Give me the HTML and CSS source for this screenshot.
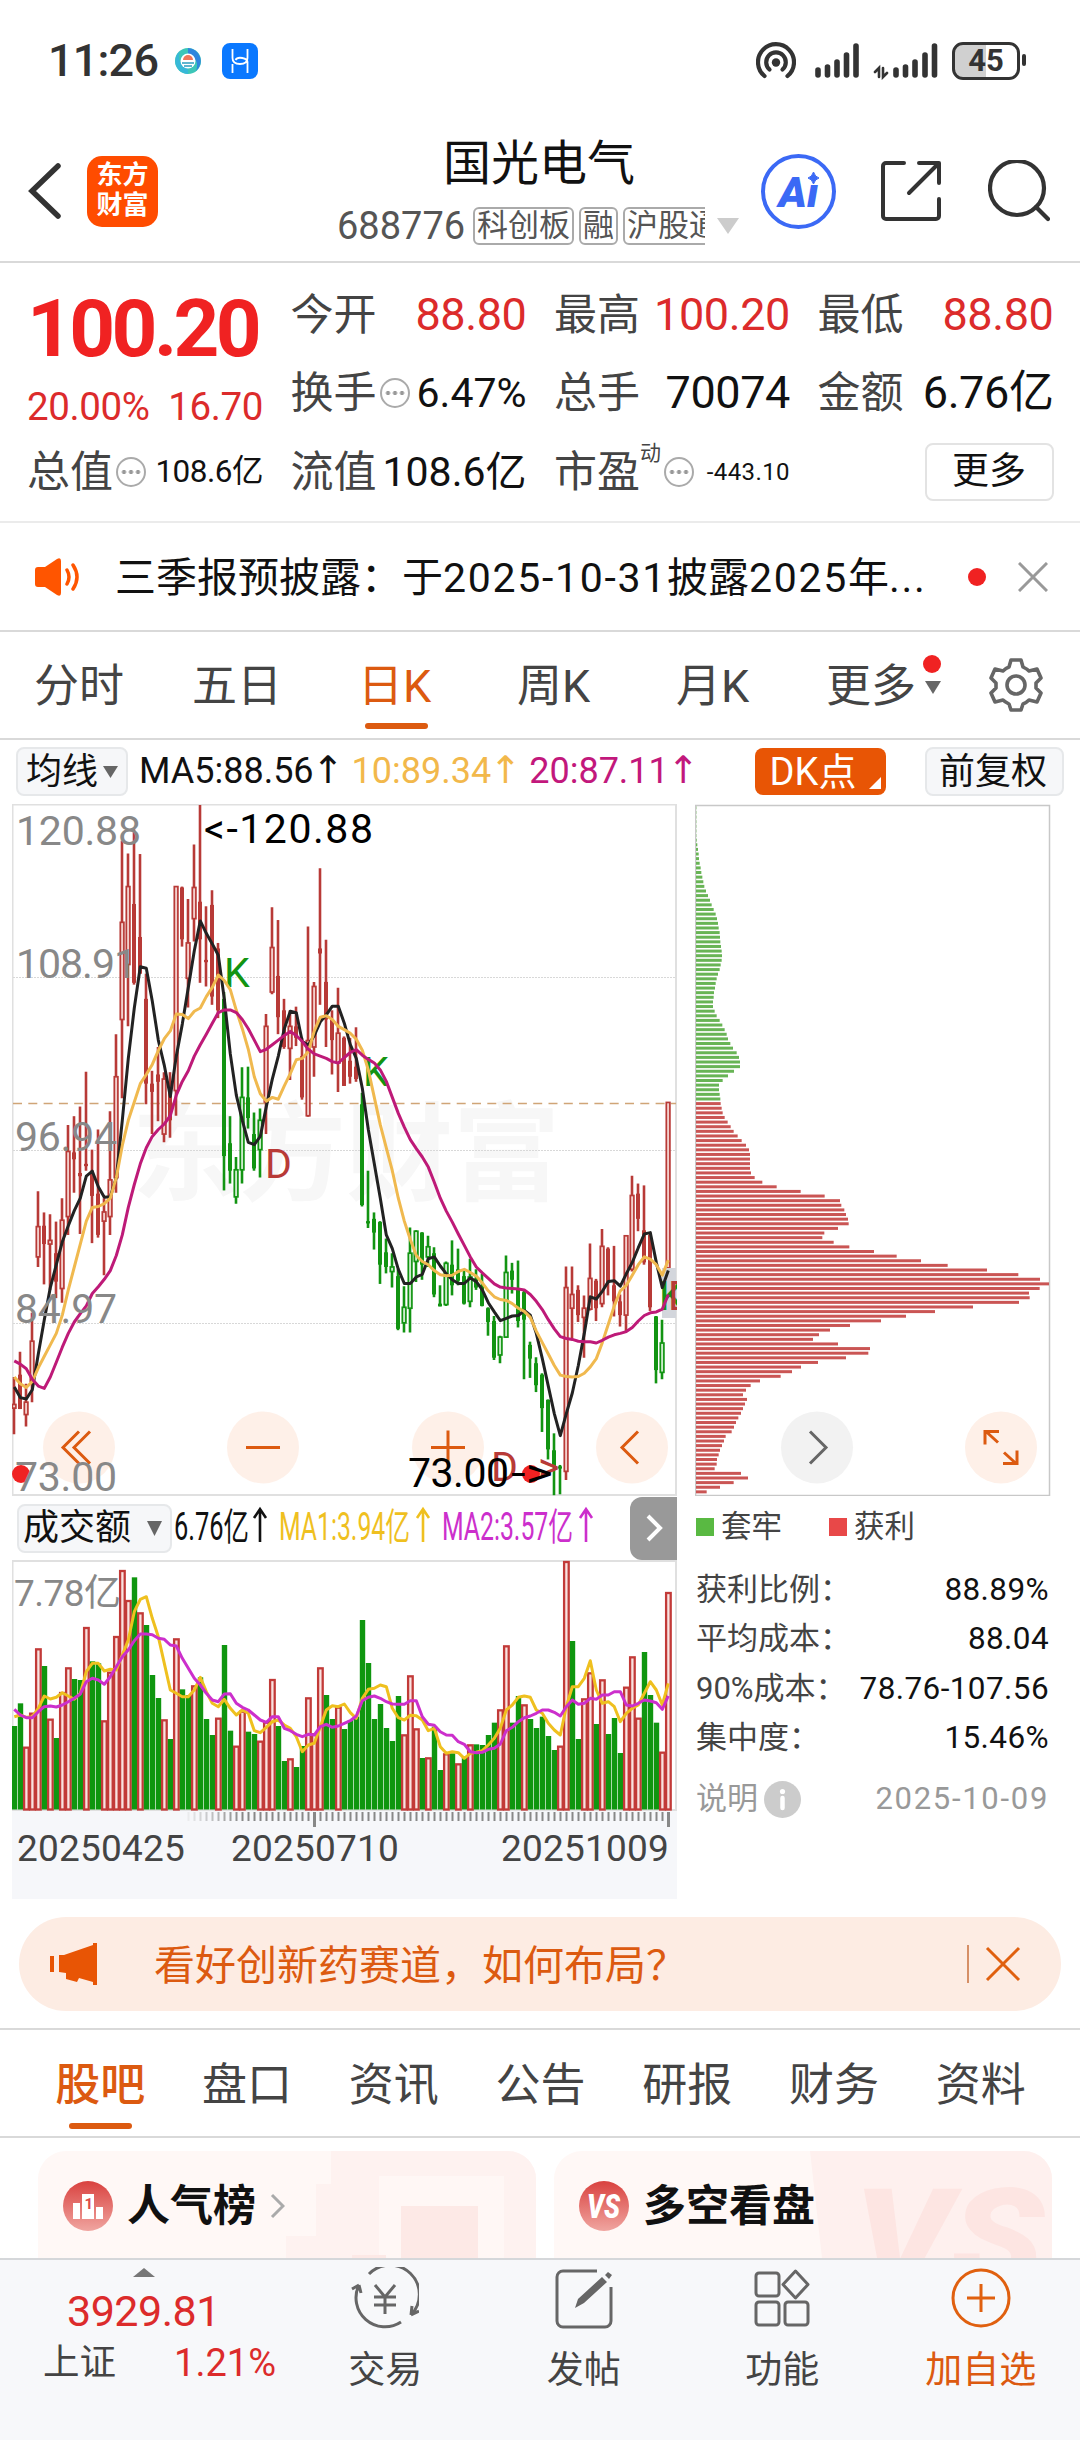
FILE: index.html
```html
<!DOCTYPE html>
<html lang="zh-CN">

<head>
    <meta charset="UTF-8">
    <meta name="viewport" content="width=device-width, initial-scale=1.0">
    <title>国光电气 688776</title>
    <link rel="stylesheet" href="styles.css">
</head>

<body>
    <div class="status-bar">
        <div class="status-left">
            <span class="clock">11:26</span>
            <svg class="app-dot" width="28" height="28" viewBox="0 0 28 28">
                <circle cx="14" cy="14" r="13" fill="#3cc6b8"/>
                <path d="M14 1a13 13 0 0 1 8 23c3-8 0-14-8-16z" fill="#2f86dd"/>
                <path d="M14 27a13 13 0 0 1-8-23c-3 8 0 14 8 16z" fill="#37b8d8"/>
                <circle cx="14" cy="14" r="7.500" fill="#fff"/>
                <path d="M9 13a5 5 0 0 1 10 0z" fill="#f0775a"/>
                <path d="M8 16h12M10 19h8" stroke="#2a9fc0" stroke-width="1.6"/>
            </svg>
            <svg class="app-square" width="36" height="36" viewBox="0 0 36 36">
                <rect width="36" height="36" rx="8" fill="#0a78ff"/>
                <path d="M10.500 6v9c0 4 3 6 7.500 6s7.500-2 7.500-6V6M10.500 30v-9M25.500 30V19c0-4-10-6-12-2" fill="none" stroke="#fff" stroke-width="1.800"/>
            </svg>
        </div>
        <div class="status-right">
            <svg width="40" height="38" viewBox="0 0 40 38" fill="none" stroke="#333" stroke-width="4.200" stroke-linecap="round">
                <path d="M8.500 34a18 18 0 1 1 23 0"/>
                <path d="M13.500 27.500a9.800 9.800 0 1 1 13 0"/>
                <circle cx="20" cy="20.500" r="4.200" fill="#333" stroke="none"/>
            </svg>
            <svg width="46" height="38" viewBox="0 0 46 38" stroke="#333" stroke-width="5.600" stroke-linecap="round">
                <path d="M3 28v5M12.500 25v8M22 20v13M31.500 13v20M41 4v29"/>
            </svg>
            <svg width="66" height="38" viewBox="0 0 66 38" stroke="#333" stroke-width="5.600" stroke-linecap="round">
                <path d="M23 28v5M32.500 25v8M42 20v13M52 13v20M61.500 4v29"/>
                <path d="M2 30l4-4v9M10 26v9l4-4" fill="none" stroke-width="2.600"/>
            </svg>
            <div class="battery"><span>45</span></div>
        </div>
    </div>

    <header class="header">
        <svg class="back" width="36" height="58" viewBox="0 0 36 58">
            <path d="M31 4L5 29l26 25" fill="none" stroke="#333" stroke-width="5.500" stroke-linecap="round"/>
        </svg>
        <div class="logo">东方<br>财富</div>
        <div class="title-box">
            <h1>国光电气</h1>
            <div class="code-row">
                <span class="code">688776</span>
                <div class="tags"><span>科创板</span><span>融</span><span>沪股通</span></div>
                <svg width="24" height="16" viewBox="0 0 24 16"><path d="M1 0h22L12 16z" fill="#ccc"/></svg>
            </div>
        </div>
        <div class="header-icons">
            <div class="ai">Ai<svg width="13" height="14" viewBox="0 0 13 14"><path d="M6.500 1Q8 6 12 7Q8 8 6.500 13Q5 8 1 7Q5 6 6.500 1" fill="#3b69f5" stroke="#3b69f5"/></svg></div>
            <svg width="62" height="62" viewBox="0 0 62 62" fill="none" stroke="#333" stroke-width="4" stroke-linejoin="round" stroke-linecap="round">
                <path d="M23 3H5a3 3 0 0 0-3 3v50a3 3 0 0 0 3 3h50a3 3 0 0 0 3-3V39M38 3h20v20M57 4L28 33"/>
            </svg>
            <svg width="62" height="62" viewBox="0 0 62 62" fill="none" stroke="#333" stroke-width="4.200" stroke-linecap="round">
                <circle cx="29" cy="28" r="27"/><path d="M48 47l12 12"/>
            </svg>
        </div>
    </header>

    <section class="quote">
        <div class="price-cell">
            <div class="price">100.20</div>
            <div class="change"><span>20.00%</span><span>16.70</span></div>
        </div>
        <div class="cell"><label>今开</label><b class="red">88.80</b></div>
        <div class="cell"><label>最高</label><b class="red">100.20</b></div>
        <div class="cell"><label>最低</label><b class="red">88.80</b></div>
        <div class="cell"><label>换手<i class="dots"></i></label><b class="mid">6.47%</b></div>
        <div class="cell"><label>总手</label><b>70074</b></div>
        <div class="cell"><label>金额</label><b>6.76亿</b></div>
        <div class="cell"><label>总值<i class="dots"></i></label><b class="small">108.6亿</b></div>
        <div class="cell"><label>流值</label><b class="mid">108.6亿</b></div>
        <div class="cell"><label>市盈<sup>动</sup><i class="dots"></i></label><b class="tiny">-443.10</b></div>
        <div class="cell"><button class="more-btn">更多</button></div>
    </section>

    <div class="notice">
        <svg width="46" height="38" viewBox="0 0 46 38">
            <path d="M0 12q0-3 3-3h7L22 1q4-2 4 2v32q0 4-4 2L10 29H3q-3 0-3-3z" fill="#ff5500"/>
            <path d="M32 12q4 7 0 14M38 7q8 12 0 24" fill="none" stroke="#ff5500" stroke-width="3.500" stroke-linecap="round"/>
        </svg>
        <p>三季报预披露：于<span>2025-10-31</span>披露<span>2025</span>年<span>...</span></p>
        <span class="red-dot"></span>
        <svg width="30" height="30" viewBox="0 0 30 30"><path d="M1 1l28 28M29 1L1 29" stroke="#999" stroke-width="3"/></svg>
    </div>

    <nav class="period-tabs">
        <span>分时</span>
        <span>五日</span>
        <span class="active">日K</span>
        <span>周K</span>
        <span>月K</span>
        <span class="more">更多<svg width="16" height="13" viewBox="0 0 16 13"><path d="M0 0h16L8 13z" fill="#666"/></svg><i class="red-dot"></i></span>
        <svg class="gear" width="54" height="54" viewBox="0 0 54 54" fill="none" stroke="#666" stroke-width="3.600" stroke-linejoin="round">
            <path d="M22 2h10l2 7q4 2 6 4l8-2 4 9-5 5v5l5 5-4 9-8-2q-3 3-6 4l-2 6H22l-2-6q-4-2-6-4l-8 2-4-9 5-5v-5l-5-5 4-9 8 2q3-3 6-4z"/>
            <circle cx="27" cy="27" r="9"/>
        </svg>
    </nav>

    <div class="ma-bar">
        <button class="chip">均线<svg width="15" height="12" viewBox="0 0 15 12"><path d="M0 0h15L7.500 12z" fill="#666"/></svg></button>
        <div class="ma-values">
            <span>MA5:88.56<u>↑</u></span>
            <span class="yellow">10:89.34<u>↑</u></span>
            <span class="pink">20:87.11<u>↑</u></span>
        </div>
        <button class="dk">DK点</button>
        <button class="chip plain">前复权</button>
    </div>

    <main class="charts">
        <div class="left">
            <svg id="kline" width="665" height="692" viewBox="12 804 665 692"></svg>
            <div class="vol-bar">
                <button class="chip">成交额<svg width="15" height="15" viewBox="0 0 15 15"><path d="M0 0h15L7.500 15z" fill="#666"/></svg></button>
                <svg class="vol-values" width="440" height="48" viewBox="175 1506 440 48">
                    <text x="174" y="1542" textLength="75" lengthAdjust="spacingAndGlyphs">6.76亿</text>
                    <text x="279" y="1542" textLength="131" lengthAdjust="spacingAndGlyphs" fill="#efc01f">MA1:3.94亿</text>
                    <text x="442" y="1542" textLength="131" lengthAdjust="spacingAndGlyphs" fill="#cc2fcc">MA2:3.57亿</text>
                    <g fill="none" stroke-width="2.600">
                        <path d="M260 1544v-33M254 1520l6-9 6 9" stroke="#111"/>
                        <path d="M423 1544v-33M417 1520l6-9 6 9" stroke="#efc01f"/>
                        <path d="M586 1544v-33M580 1520l6-9 6 9" stroke="#cc2fcc"/>
                    </g>
                </svg>
                <button class="expand"><svg width="18" height="28" viewBox="0 0 18 28"><path d="M3 2l12 12L3 26" fill="none" stroke="#fff" stroke-width="4"/></svg></button>
            </div>
            <svg id="volume" width="665" height="251" viewBox="12 1560 665 251"></svg>
            <div class="axis">
                <svg id="ticks" width="665" height="18" viewBox="12 1811 665 18"></svg>
                <div class="dates"><span>20250425</span><span>20250710</span><span>20251009</span></div>
            </div>
        </div>

        <div class="right">
            <svg id="chips" width="356" height="692" viewBox="695 804 356 692"></svg>
            <div class="legend">
                <span><i class="sq green"></i>套牢</span>
                <span><i class="sq"></i>获利</span>
            </div>
            <dl>
                <div><dt>获利比例：</dt><dd>88.89%</dd></div>
                <div><dt>平均成本：</dt><dd>88.04</dd></div>
                <div><dt>90%成本：</dt><dd>78.76-107.56</dd></div>
                <div><dt>集中度：</dt><dd>15.46%</dd></div>
            </dl>
            <div class="explain">
                <span>说明</span>
                <svg width="37" height="37" viewBox="0 0 37 37"><circle cx="18.500" cy="18.500" r="18.500" fill="#ccc"/><circle cx="18.500" cy="10.500" r="2.600" fill="#fff"/><path d="M18.500 17v10" stroke="#fff" stroke-width="4.500" stroke-linecap="round"/></svg>
                <time>2025-10-09</time>
            </div>
        </div>
    </main>

    <div class="banner">
        <svg width="48" height="42" viewBox="0 0 48 42" fill="#e85505">
            <path d="M0 13h4v16H0zM9 12h5L43 2V0h4v42h-4v-3l-14-4-2 4-11-3v-6l-7-1z"/>
        </svg>
        <p>看好创新药赛道，如何布局？</p>
        <svg class="banner-close" width="54" height="38" viewBox="0 0 54 38"><path d="M1 0v38" stroke="#c9703d" stroke-width="1.500"/><path d="M20 3l32 32M52 3L20 35" stroke="#e0600f" stroke-width="3"/></svg>
    </div>

    <nav class="info-tabs">
        <span class="active">股吧</span>
        <span>盘口</span>
        <span>资讯</span>
        <span>公告</span>
        <span>研报</span>
        <span>财务</span>
        <span>资料</span>
    </nav>

    <div class="cards">
        <div class="card rank">
            <svg width="50" height="50" viewBox="0 0 50 50">
                <defs><linearGradient id="ball" x1="0" y1="0" x2="0" y2="1"><stop offset="0" stop-color="#d9423f"/><stop offset="1" stop-color="#f0a5a0"/></linearGradient></defs>
                <circle cx="25" cy="25" r="25" fill="url(#ball)"/>
                <path d="M10 22h7v16h-7zM19 13h12v25H19zM33 26h7v12h-7z" fill="#fff"/>
                <text x="21.500" y="28" class="one">1</text>
            </svg>
            <h3>人气榜</h3>
            <svg width="15" height="26" viewBox="0 0 15 26"><path d="M2 2l11 11L2 24" fill="none" stroke="#aaa" stroke-width="3"/></svg>
            <svg class="deco" width="250" height="107" viewBox="0 0 250 107">
                <path d="M45 0h205v107H0V85h30V33h15z" fill="#fef2f0"/>
                <path d="M93 25h125v82H93z" fill="#fff7f5"/>
                <path d="M115 55h77v52h-77z" fill="#fde9e6"/>
                <path d="M66 104h34v3H66z" fill="#fde9e6"/>
            </svg>
        </div>
        <div class="card vs">
            <svg width="50" height="50" viewBox="0 0 50 50">
                <circle cx="25" cy="25" r="25" fill="url(#ball)"/>
                <text x="8" y="37" class="vs-text" textLength="33" lengthAdjust="spacingAndGlyphs">VS</text>
            </svg>
            <h3>多空看盘</h3>
            <svg class="deco" width="250" height="107" viewBox="0 0 250 107">
                <path d="M8 0h242v107H20z" fill="#fef0ee"/>
                <text x="52" y="134" class="deco-text" textLength="190" lengthAdjust="spacingAndGlyphs">VS</text>
            </svg>
        </div>
    </div>

    <footer class="bottom-bar">
        <div class="index">
            <svg width="22" height="9" viewBox="0 0 22 9"><path d="M0 9h22L11 0z" fill="#777"/></svg>
            <strong>3929.81</strong>
            <div><span>上证</span><em>1.21%</em></div>
        </div>
        <div class="item">
            <svg width="68" height="62" viewBox="0 0 68 62" fill="none" stroke="#666" stroke-width="3">
                <path d="M18 7a29 29 0 0 1 42 41M60 48l1-9M60 48l8-4M50 55A29 29 0 0 1 8 18M8 18l-7 4M8 18l2 8"/>
                <path d="M24 18l10 12 10-12M23 30h22M23 38h22M34 30v17"/>
            </svg>
            <span>交易</span>
        </div>
        <div class="item">
            <svg width="60" height="62" viewBox="0 0 60 62" fill="none" stroke="#666" stroke-width="3">
                <path d="M43 4H9a6 6 0 0 0-6 6v44a6 6 0 0 0 6 6h42a6 6 0 0 0 6-6V20"/>
                <path d="M21 41l3-9L48 10l5 5-23 21zM51 8l3-3 4 3-3 4z" fill="#666" stroke="none"/>
            </svg>
            <span>发帖</span>
        </div>
        <div class="item">
            <svg width="56" height="62" viewBox="0 0 56 62" fill="none" stroke="#666" stroke-width="3">
                <rect x="2" y="6" width="23" height="23" rx="3"/>
                <rect x="2" y="35" width="23" height="23" rx="3"/>
                <rect x="31" y="35" width="23" height="23" rx="3"/>
                <path d="M41.500 4L54 17.500 41.500 31 29 17.500z" stroke-linejoin="round"/>
            </svg>
            <span>功能</span>
        </div>
        <div class="item orange">
            <svg width="62" height="62" viewBox="0 0 62 62" fill="none" stroke="#e0600f" stroke-width="3">
                <circle cx="31" cy="31" r="28"/><path d="M17 31h28M31 17v28"/>
            </svg>
            <span>加自选</span>
        </div>
    </footer>

    <script src="script.js"></script>
</body>

</html>
```

FILE: styles.css
```css
* {
    box-sizing: border-box;
}

body {
    margin: 0;
    width: 1080px;
    height: 2440px;
    overflow: hidden;
    font-family: Roboto, "Noto Sans CJK SC", sans-serif;
    background-color: #ffffff;
    color: #111111;
    display: flex;
    flex-direction: column;
}

h1, h3, p, dl, dd {
    margin: 0;
    font-weight: 400;
}

i, em {
    font-style: normal;
}

button {
    font-family: inherit;
    color: inherit;
    padding: 0;
    border: none;
}

svg {
    flex: none;
    display: block;
}

.red {
    color: #dc2b2b;
}

.red-dot {
    width: 18px;
    height: 18px;
    border-radius: 50%;
    background-color: #f02222;
}

/* status bar */
.status-bar {
    height: 122px;
    padding: 0 60px 0 48px;
    display: flex;
    justify-content: space-between;
    align-items: center;
    color: #333333;
}

.status-left, .status-right {
    display: flex;
    align-items: center;
}

.clock {
    font-size: 45px;
    font-weight: 500;
    letter-spacing: -0.8px;
    width: 126px;
}

.app-square {
    margin-left: 20px;
}

.status-right svg {
    margin-right: 19px;
}

.status-right svg:nth-child(2) {
    margin-right: 12px;
}

.status-right svg:nth-child(3) {
    margin-right: 13px;
}

.battery {
    position: relative;
    width: 68px;
    height: 38px;
    border: 3.5px solid #333333;
    border-radius: 11px;
    background: linear-gradient(90deg, #d0d0d0 50%, #ffffff 50%);
    font-size: 31px;
    font-weight: 700;
    line-height: 31px;
    text-align: center;
}

.battery::after {
    content: "";
    position: absolute;
    left: 67px;
    top: 9px;
    width: 4px;
    height: 12px;
    border-radius: 2px;
    background-color: #333333;
}

/* header */
.header {
    height: 141px;
    padding: 0 30px 0 27px;
    display: flex;
    align-items: center;
    border-bottom: 2px solid #d9d9d9;
}

.logo {
    width: 71px;
    height: 71px;
    margin-left: 24px;
    border-radius: 15px;
    background-color: #ff4c00;
    color: #ffffff;
    font-size: 26px;
    font-weight: 700;
    line-height: 30px;
    padding-top: 4px;
    text-align: center;
}

.title-box {
    width: 404px;
    margin-left: 179px;
}

.title-box h1 {
    font-size: 48px;
    line-height: 60px;
    padding-left: 106px;
    margin-top: 10px;
}

.code-row {
    display: flex;
    align-items: center;
    height: 64px;
}

.code {
    width: 136px;
    font-size: 38px;
    color: #555555;
}

.tags {
    width: 232px;
    margin-right: 11px;
    overflow: hidden;
    display: flex;
    gap: 5px;
}

.tags span {
    flex: none;
    height: 38px;
    border: 2px solid #aaaaaa;
    border-radius: 6px;
    padding: 0 2px;
    font-size: 31px;
    line-height: 33px;
    color: #555555;
}

.header-icons {
    display: flex;
    align-items: center;
    gap: 45px;
    margin-left: 20px;
}

.ai {
    position: relative;
    width: 75px;
    height: 75px;
    border: 4px solid #3b69f5;
    border-radius: 50%;
    color: #3b69f5;
    font-size: 43px;
    font-weight: 900;
    font-style: italic;
    line-height: 68px;
    text-align: center;
}

.ai svg {
    position: absolute;
    right: 12px;
    top: 13px;
    background-color: #ffffff;
}

/* quote */
.quote {
    height: 261px;
    padding: 13px 27px 0;
    display: grid;
    grid-template-columns: repeat(4, 236px);
    grid-auto-rows: 78.5px;
    column-gap: 27.5px;
    border-bottom: 2px solid #ebebeb;
}

.price-cell {
    grid-row: span 2;
    color: #dc2b2b;
}

.price {
    font-size: 80px;
    font-weight: 700;
    letter-spacing: -3.6px;
    line-height: 94px;
    color: #f02222;
    padding-top: 6px;
}

.change {
    display: flex;
    justify-content: space-between;
    font-size: 38.5px;
    line-height: 62px;
    letter-spacing: -0.4px;
}

.cell {
    display: flex;
    align-items: center;
    justify-content: space-between;
    line-height: 60px;
}

.cell label {
    display: flex;
    align-items: center;
    font-size: 43px;
    color: #444444;
}

.cell b {
    font-size: 45px;
    font-weight: 400;
    letter-spacing: -0.4px;
}

.cell .mid {
    font-size: 41px;
    letter-spacing: 0;
}

.cell .small {
    font-size: 31.5px;
    letter-spacing: -0.5px;
}

.cell .tiny {
    font-size: 24px;
    letter-spacing: 0.4px;
}

.cell sup {
    font-size: 21px;
    line-height: 22px;
    align-self: flex-start;
}

.dots {
    width: 30px;
    height: 30px;
    margin-left: 3px;
    border: 2px solid #aaaaaa;
    border-radius: 50%;
    background: radial-gradient(circle, #999999 1.8px, transparent 2.4px) center / 7px 26px repeat-x;
    background-clip: content-box;
    background-origin: content-box;
    padding: 0 2px;
}

.more-btn {
    width: 129px;
    height: 58px;
    margin-left: auto;
    border: 2px solid #e3e3e3;
    border-radius: 8px;
    background-color: #ffffff;
    font-size: 37px;
    line-height: 50px;
}

/* notice */
.notice {
    height: 109px;
    padding: 0 32px 0 35px;
    display: flex;
    align-items: center;
    border-bottom: 2px solid #d9d9d9;
}

.notice p {
    width: 850px;
    margin: -5px 0 0 34px;
    font-size: 41px;
    white-space: nowrap;
}

.notice p span {
    letter-spacing: 1.7px;
}

.notice .red-dot {
    margin: 0 32px 0 3px;
}

/* period tabs */
.period-tabs {
    height: 108px;
    padding-left: 34px;
    display: flex;
    align-items: center;
    border-bottom: 2px solid #d9d9d9;
    font-size: 45px;
    line-height: 66px;
    color: #444444;
}

.period-tabs span {
    position: relative;
    top: 2px;
    width: 158px;
}

.period-tabs .active, .info-tabs .active {
    color: #dc5a10;
}

.period-tabs .active {
    width: 167px;
    padding-left: 8px;
}

.period-tabs .active::after {
    content: "";
    position: absolute;
    left: 15px;
    bottom: -9px;
    width: 63px;
    height: 6px;
    border-radius: 3px;
    background-color: #dc5a10;
}

.period-tabs span:nth-child(5) {
    width: 151px;
    padding-left: 1px;
}

.period-tabs .more {
    display: flex;
    align-items: center;
    width: 163px;
}

.period-tabs .more svg {
    margin-left: 9px;
}

.period-tabs .more .red-dot {
    position: absolute;
    left: 97px;
    top: 1px;
}

/* ma bar */
.ma-bar {
    height: 64px;
    padding: 7px 16px 0;
    display: flex;
    align-items: flex-start;
}

.chip {
    display: flex;
    align-items: center;
    justify-content: space-between;
    width: 112px;
    height: 49px;
    padding: 0 8px;
    border: 2px solid #e6e8ea;
    border-radius: 8px;
    background-color: #f6f7f9;
    font-size: 36px;
    line-height: 44px;
}

.chip.plain {
    width: 139px;
    padding: 0 12px;
    margin-left: 39px;
}

.ma-values {
    display: flex;
    gap: 10px;
    width: 616px;
    margin-left: 11px;
    font-size: 36px;
    line-height: 48px;
}

.ma-values span {
    display: flex;
}

.ma-values u {
    width: 27px;
    margin-left: 1px;
    display: flex;
    justify-content: center;
    font-family: "DejaVu Sans", sans-serif;
    font-size: 38px;
    line-height: 46px;
    text-decoration: none;
}

.yellow {
    color: #f2b84b;
}

.pink {
    color: #c2187c;
}

.dk {
    position: relative;
    width: 131px;
    height: 47px;
    margin-top: 1px;
    border-radius: 8px;
    background-color: #e85505;
    color: #ffffff;
    font-size: 38px;
    line-height: 44px;
    padding-right: 15px;
}

.dk::after {
    content: "";
    position: absolute;
    right: 5px;
    bottom: 6px;
    border-left: 12px solid transparent;
    border-bottom: 12px solid #ffffff;
}

/* charts */
.charts {
    display: flex;
    gap: 18px;
    padding-left: 12px;
    height: 1095px;
}

.left {
    width: 665px;
}

.right {
    width: 356px;
}

#kline text {
    font-size: 41px;
}

#kline .price-label {
    fill: #888888;
}

#kline .watermark {
    font-size: 107px;
    font-weight: 700;
    fill: #f7f7f7;
}

.vol-bar {
    height: 64px;
    padding-left: 5px;
    display: flex;
    align-items: center;
}

.vol-bar .chip {
    width: 155px;
    padding: 0 8px 0 4px;
}

.vol-values {
    font-size: 38px;
    fill: #111111;
    margin-left: 3px;
}

.expand {
    width: 47px;
    height: 63px;
    margin-left: auto;
    border-radius: 12px 0 0 12px;
    background-color: #999999;
    padding-left: 15px;
}

#volume text {
    font-size: 37px;
    fill: #888888;
}

.axis {
    height: 88px;
    background-color: #f6f7fa;
}

.dates {
    display: flex;
    padding: 0 8px 0 5px;
    font-size: 37px;
    line-height: 40px;
    letter-spacing: 0.2px;
    color: #444444;
}

.dates span {
    width: 214px;
}

.dates span:last-child {
    margin-left: auto;
    width: auto;
}

.legend {
    display: flex;
    gap: 47px;
    height: 62px;
    font-size: 30.5px;
    line-height: 60px;
    color: #444444;
}

.legend span {
    display: flex;
    align-items: center;
}

.sq {
    width: 18px;
    height: 18px;
    margin-right: 7px;
    background-color: #e84848;
}

.sq.green {
    background-color: #59b942;
}

.legend span:first-child {
    margin-left: 1px;
}

dl {
    padding: 7px 2px 0 1px;
}

dl div {
    display: flex;
    justify-content: space-between;
    line-height: 49.3px;
}

dt {
    font-size: 31px;
    color: #444444;
    white-space: nowrap;
}

dd {
    font-size: 31.5px;
    letter-spacing: 0.4px;
    white-space: nowrap;
}

.explain {
    display: flex;
    align-items: center;
    margin-top: 14px;
    padding: 0 2px 0 1px;
    font-size: 31px;
    line-height: 46px;
    color: #999999;
}

.explain svg {
    margin-left: 6px;
}

.explain time {
    margin-left: auto;
    letter-spacing: 1.7px;
}

/* banner */
.banner {
    width: 1042px;
    height: 94px;
    margin: 18px 0 17px 19px;
    padding: 0 40px 0 31px;
    display: flex;
    flex: none;
    align-items: center;
    border-radius: 47px;
    background-color: #fdece3;
    color: #dc5a10;
    font-size: 41px;
}

.banner p {
    margin: -4px 0 0 56px;
}

.banner-close {
    margin-left: auto;
}

/* info tabs */
.info-tabs {
    height: 110px;
    flex: none;
    padding: 2px 26px 0 27px;
    display: flex;
    border-top: 2px solid #d9d9d9;
    border-bottom: 2px solid #d9d9d9;
    font-size: 45px;
    line-height: 107px;
    color: #444444;
}

.info-tabs span {
    position: relative;
    flex: 1;
    text-align: center;
}

.info-tabs .active {
    font-weight: 500;
}

.info-tabs .active::after {
    content: "";
    position: absolute;
    left: 42px;
    bottom: 7px;
    width: 63px;
    height: 6px;
    border-radius: 3px;
    background-color: #dc5a10;
}

/* cards */
.cards {
    height: 120px;
    flex: none;
    padding: 13px 28px 0 38px;
    display: flex;
    gap: 18px;
    overflow: hidden;
}

.card {
    position: relative;
    width: 498px;
    height: 140px;
    padding: 30px 0 0 25px;
    display: flex;
    gap: 14px;
    overflow: hidden;
    border-radius: 28px 28px 0 0;
    background-color: #fff8f6;
}

.card h3 {
    font-size: 43px;
    font-weight: 700;
    line-height: 50px;
}

.card h3 + svg {
    margin-top: 12px;
}

.card .deco {
    position: absolute;
    right: 0;
    top: 0;
    z-index: 0;
    margin: 0;
}

.one {
    font-size: 15px;
    font-weight: 700;
    fill: #dc4c48;
}

.vs-text, .deco-text {
    font-size: 34px;
    font-weight: 900;
    font-style: italic;
    fill: #ffffff;
}

.deco-text {
    font-size: 135px;
    fill: #fde5e2;
}

/* bottom bar */
.bottom-bar {
    flex: none;
    height: 182px;
    display: flex;
    border-top: 2px solid #d5d7da;
    background-color: #f7f8fa;
    color: #444444;
}

.index {
    width: 286px;
    padding: 8px 0 0 43px;
    color: #dc2b2b;
}

.index svg {
    margin-left: 90px;
}

.index strong {
    display: block;
    padding-left: 24px;
    font-size: 43px;
    font-weight: 400;
    line-height: 50px;
    margin-top: 9px;
    letter-spacing: -0.5px;
}

.index div {
    display: flex;
    justify-content: space-between;
    width: 233px;
    font-size: 38px;
    line-height: 54px;
}

.index span {
    font-size: 36.5px;
    color: #444444;
}

.item {
    width: 198.5px;
    display: flex;
    flex-direction: column;
    align-items: center;
    padding-top: 7px;
    font-size: 37px;
}

.item span {
    line-height: 56px;
    margin-top: 14px;
}

.item.orange {
    color: #dc5a10;
}
```

FILE: script.js
```js
const RED = '#b83a37';
const GREEN = '#129412';
const STEP = 6;
const FIRST_X = 14;

// price level scale: 32 is the top of the chart, 1538 the bottom
const priceY = (v) => 805 + (v - 32) * 0.4583;
// volume level scale: 213 is the top, 960 the bottom
const volY = (v) => 1490 + v / 3;
const barX = (i) => FIRST_X + i * STEP;

// high, body top, body bottom, low, type (h = hollow red, f = red, g = green, o = hollow green)
const candles = [
    [1280,1340,1348,1405,'h'],[1225,1275,1350,1350,'f'],[1295,1335,1362,1388,'h'],[1140,1202,1290,1335,'h'],[875,952,1018,1040,'h'],
    [921,950,990,1078,'f'],[925,982,990,1090,'h'],[941,1010,1072,1108,'f'],[890,938,1087,1118,'h'],[730,788,930,970,'h'],
    [711,790,805,878,'f'],[690,835,842,968,'f'],[614,815,820,830,'f'],[784,830,885,988,'f'],[740,880,970,976,'f'],
    [890,920,940,1058,'h'],[700,850,930,970,'h'],[532,625,845,878,'h'],[110,288,500,672,'h'],[138,210,380,515,'h'],
    [85,248,420,424,'f'],[139,320,400,400,'f'],[400,455,640,685,'f'],[612,640,658,750,'f'],[560,620,636,722,'f'],
    [615,630,750,768,'h'],[615,640,720,758,'f'],[210,210,655,710,'h'],[210,212,325,341,'f'],[237,333,410,474,'h'],
    [118,212,280,330,'h'],[32,243,325,420,'f'],[253,370,375,428,'f'],[218,250,450,468,'f'],[333,345,480,497,'f'],
    [440,455,798,873,'g'],[711,770,830,858,'g'],[800,828,887,902,'o'],[604,670,828,858,'o'],[603,670,715,738,'g'],
    [703,750,825,830,'g'],[694,720,784,845,'o'],[488,515,680,750,'h'],[255,343,440,445,'h'],[283,405,495,532,'f'],
    [455,480,560,564,'f'],[480,515,563,632,'h'],[472,515,540,558,'f'],[540,580,670,675,'f'],[297,546,710,712,'h'],
    [418,428,560,625,'h'],[170,345,356,468,'f'],[326,418,500,560,'f'],[480,500,545,620,'f'],[431,530,595,658,'h'],
    [537,540,645,645,'f'],[540,590,625,640,'f'],[517,603,630,636,'f'],[660,685,905,908,'g'],[830,940,945,955,'g'],
    [921,935,965,1002,'g'],[940,942,1035,1077,'g'],[978,1008,1040,1054,'g'],[1010,1040,1050,1085,'o'],[1045,1060,1175,1178,'g'],
    [1082,1128,1162,1183,'o'],[954,1010,1130,1183,'o'],[960,962,1028,1073,'o'],[964,965,1035,1068,'g'],[972,996,1018,1040,'o'],
    [997,1010,1100,1106,'g'],[1080,1120,1126,1126,'g'],[1028,1032,1122,1125,'o'],[982,1035,1080,1102,'g'],[1000,1045,1070,1080,'g'],
    [1045,1060,1120,1122,'g'],[1022,1062,1115,1128,'o'],[1045,1065,1085,1090,'g'],[1055,1080,1125,1126,'g'],[1128,1130,1160,1190,'g'],
    [1147,1158,1238,1243,'g'],[1190,1193,1232,1250,'o'],[1015,1052,1193,1195,'o'],[1031,1048,1068,1098,'g'],[1026,1090,1158,1172,'g'],
    [1090,1095,1155,1285,'g'],[1203,1210,1240,1282,'g'],[1237,1250,1298,1313,'g'],[1272,1275,1348,1400,'g'],[1329,1330,1438,1460,'g'],
    [1403,1440,1475,1538,'g'],[1472,1475,1480,1536,'g'],[1039,1085,1486,1505,'h'],[1039,1100,1130,1196,'h'],[1080,1090,1145,1160,'f'],
    [1102,1130,1150,1238,'h'],[989,1065,1132,1135,'h'],[1066,1070,1130,1158,'f'],[957,995,1120,1128,'h'],[997,1000,1075,1102,'f'],
    [994,1080,1115,1148,'f'],[1100,1115,1145,1170,'f'],[970,972,1145,1180,'h'],[841,884,1045,1050,'h'],[858,880,935,962,'f'],
    [862,960,1030,1035,'f'],[965,970,1128,1136,'f'],[1147,1148,1265,1294,'g'],[1155,1206,1270,1285,'o'],[680,681,1042,1045,'h']
];

const ma5 = [1302,1325,1328,1308,1230,1155,1085,1035,985,950,917,890,842,831,865,888,887,845,720,585,475,385,388,460,545,600,668,580,510,430,350,285,312,335,360,455,575,665,720,768,773,755,690,630,580,520,482,485,548,556,535,505,490,471,471,508,555,585,650,740,815,890,970,1000,1045,1076,1076,1062,1056,1022,1018,1038,1055,1068,1076,1076,1064,1072,1090,1118,1138,1157,1152,1147,1146,1135,1145,1185,1240,1300,1360,1408,1360,1315,1255,1185,1105,1110,1093,1072,1070,1082,1055,1030,998,968,965,1030,1085,1048];
const ma10 = [1280,1295,1303,1290,1260,1235,1210,1185,1145,1090,1040,990,940,910,908,902,890,845,775,720,680,640,620,598,568,542,525,488,489,498,482,475,450,430,403,415,435,480,520,565,625,662,678,670,674,645,618,588,585,570,525,495,492,500,515,522,530,543,567,610,670,730,780,830,890,940,980,1015,1028,1035,1048,1057,1059,1058,1050,1045,1052,1060,1075,1092,1105,1111,1113,1120,1130,1137,1150,1180,1205,1230,1255,1276,1279,1280,1279,1272,1258,1240,1205,1165,1125,1092,1080,1058,1035,1018,1023,1035,1058,1025];
const ma20 = [1245,1252,1262,1285,1300,1305,1280,1248,1215,1185,1160,1142,1125,1098,1083,1067,1048,1015,970,910,860,815,780,755,740,728,710,665,635,612,580,555,532,508,485,479,479,485,500,520,545,570,565,555,545,535,526,535,548,565,575,580,585,592,595,583,572,566,578,587,595,610,635,670,705,735,762,782,800,822,855,890,918,942,968,993,1018,1040,1053,1065,1077,1084,1086,1087,1088,1090,1100,1115,1133,1155,1175,1192,1196,1198,1202,1203,1203,1206,1200,1193,1188,1185,1181,1172,1158,1146,1140,1138,1132,1100];

const volumes = [708,640,770,668,475,528,686,744,606,532,567,570,411,514,520,691,545,438,240,330,262,367,405,555,624,688,747,445,598,615,586,562,687,735,683,465,722,767,662,725,732,752,695,567,708,813,805,831,768,622,730,532,615,687,650,717,690,680,390,519,687,642,714,753,618,733,556,715,804,802,710,840,790,790,820,800,763,763,765,735,698,658,466,698,618,643,687,714,680,738,780,767,213,453,747,625,547,702,568,732,684,789,590,499,683,486,615,698,785,306];
const volColors = 'ggrrrgrgrrggrggrrrrrgrgggrgrggrgggrggrrggrrrggrggrrrggrggggggggggrrrgrggrgrgrggggrrggrgggggrrggrrgrgggrrrgggrr';
const volMa1 = [680,675,682,680,655,618,627,622,608,618,628,610,545,520,520,543,538,540,495,450,365,328,320,385,440,520,600,610,620,620,600,562,605,640,650,628,655,675,660,670,722,728,712,695,690,705,715,740,785,765,760,710,660,647,650,642,668,685,625,598,595,585,590,655,683,690,676,677,690,722,715,770,790,785,788,805,790,787,782,765,745,715,660,645,622,618,622,660,670,700,720,735,650,590,590,565,512,600,640,635,650,695,670,655,645,610,575,600,645,580];
const volMa2 = [658,675,683,683,665,650,648,651,645,635,625,612,575,565,570,583,560,530,500,480,452,432,432,434,445,448,465,468,505,535,565,585,610,630,635,612,611,640,652,660,675,690,697,680,680,715,722,733,740,733,735,710,703,712,708,700,692,678,632,622,618,625,635,642,643,643,632,632,680,703,706,725,735,736,755,763,785,788,787,778,775,762,722,712,695,683,678,670,660,660,667,678,650,630,643,640,625,628,615,615,605,605,645,648,640,630,633,638,658,618];

// cost distribution, one row per price step
const cost = [1,1,1,1,1,1,1,2,4,6,8,9,11,14,16,19,22,25,30,36,42,47,53,59,63,66,68,71,72,73,75,77,78,77,74,71,66,62,59,57,54,53,51,51,56,62,71,79,86,92,96,103,111,122,129,132,132,114,96,80,69,69,71,73,74,77,80,86,95,104,113,125,137,150,159,162,162,162,162,165,176,199,242,314,386,432,436,445,450,456,458,426,385,379,413,460,534,602,675,755,873,967,1032,1059,1031,999,1001,969,831,717,630,555,462,402,369,351,426,522,517,450,366,315,288,254,192,164,150,141,153,147,141,135,127,120,114,107,89,84,78,72,68,63,62,56,135,156,113,72,32];
const PROFIT_ROW = 64;

function line(values, toY, color, width) {
    const pts = values.map((v, i) => `${barX(i) + 0.3},${toY(v).toFixed(1)}`).join(' ');
    return `<polyline points="${pts}" fill="none" stroke="${color}" stroke-width="${width}" stroke-linejoin="round"/>`;
}

function roundButton(x, icon, bg, color) {
    return `<circle cx="${x}" cy="1447.5" r="36" fill="${bg}"/><path d="${icon}" transform="translate(${x} 1447.5)" fill="none" stroke="${color}" stroke-width="3"/>`;
}

function drawKline() {
    let s = '<text class="watermark" x="132" y="1192">东方财富</text>';
    s += '<rect x="12.5" y="804.5" width="663.5" height="690.5" fill="none" stroke="#e0e0e0" stroke-width="2"/>';
    [977.5, 1150.5, 1323.5].forEach((y) => {
        s += `<path d="M13 ${y}H676" stroke="#d8d8d8" stroke-dasharray="2 1"/>`;
    });
    s += '<path d="M13 1103.500H676" stroke="#d0a577" stroke-width="1.500" stroke-dasharray="9 6.300"/>';

    candles.forEach(([high, top, bottom, low, type], i) => {
        const x = barX(i);
        const up = type === 'h' || type === 'f';
        const color = up ? RED : GREEN;
        const t = priceY(top);
        const h = Math.max(priceY(bottom) - t, 1.5);
        if (type === 'h' || type === 'o') {
            s += `<path d="M${x} ${priceY(high)}V${t}M${x} ${t + h}V${priceY(low)}" stroke="${color}" stroke-width="2.600"/>`;
            s += `<rect x="${x - 1.7}" y="${t}" width="3.600" height="${h}" fill="${up ? '#f3cfcc' : '#cdeccd'}" stroke="${color}" stroke-width="1.700"/>`;
        } else {
            s += `<path d="M${x} ${priceY(high)}V${priceY(low)}" stroke="${color}" stroke-width="2.600"/>`;
            s += `<rect x="${x - 2}" y="${t}" width="4" height="${h}" fill="${color}"/>`;
        }
    });

    const soft = 'rgba(253, 228, 214, 0.55)';
    s += roundButton(79, 'M0 -16L-16 0L0 16M11 -16L-5 0L11 16', soft, '#dc5a10');
    s += roundButton(263, 'M-17 0H17', soft, '#dc5a10');
    s += roundButton(448, 'M-17 0H17M0 -17V17', soft, '#dc5a10');
    s += roundButton(632, 'M6 -16L-10 0L6 16', soft, '#dc5a10');

    s += `<text x="224" y="987" fill="${GREEN}">K</text><text x="363" y="1086" fill="${GREEN}">K</text>`;
    s += `<text x="265" y="1178" fill="${RED}">D</text>`;
    s += '<rect x="662" y="1268" width="14" height="50" fill="#d3d6dc"/>';
    s += `<svg x="640" y="1260" width="37" height="60"><text x="19" y="50" fill="${GREEN}">K</text><text x="28" y="50" fill="${RED}">D</text></svg>`;
    s += line(ma5, priceY, '#222', 3) + line(ma10, priceY, '#f0b94f', 3) + line(ma20, priceY, '#be1a78', 3);

    s += '<text class="price-label" x="16" y="845" textLength="125">120.88</text>';
    s += '<text class="price-label" x="16" y="978" textLength="121">108.91</text>';
    s += '<text class="price-label" x="15" y="1151" textLength="102">96.94</text>';
    s += '<text class="price-label" x="15" y="1323" textLength="102">84.97</text>';
    s += '<circle cx="21" cy="1474" r="9" fill="#f02222"/>';
    s += '<text class="price-label" x="15" y="1491" textLength="102">73.00</text>';
    s += '<text x="204" y="843" textLength="169">&lt;-120.88</text>';
    s += `<text x="491" y="1481" fill="${RED}">D</text><text x="538" y="1481" fill="${RED}">&gt;</text>`;
    s += '<circle cx="531" cy="1474" r="9" fill="#f02222"/>';
    s += '<text x="408" y="1487" textLength="101">73.00</text>';
    s += '<text x="511" y="1487" textLength="42" lengthAdjust="spacingAndGlyphs">-&gt;</text>';
    document.getElementById('kline').innerHTML = s;
}

function drawVolume() {
    let s = '<rect x="12.5" y="1561" width="663.5" height="249" fill="none" stroke="#e0e0e0" stroke-width="2"/>';
    s += '<text x="14" y="1606" textLength="107">7.78亿</text>';
    volumes.forEach((v, i) => {
        const x = barX(i);
        const y = volY(v);
        if (volColors[i] === 'g') {
            s += `<rect x="${x - 2.2}" y="${y}" width="5.400" height="${1809.5 - y}" fill="#0f960f"/>`;
        } else {
            s += `<rect x="${x - 1.9}" y="${y + 1}" width="4.600" height="${1808.5 - y}" fill="#f9e3e1" stroke="#c23a38" stroke-width="2.300"/>`;
        }
    });
    s += line(volMa1, volY, '#efc01f', 3) + line(volMa2, volY, '#cc2fcc', 3);
    document.getElementById('volume').innerHTML = s;

    let t = '';
    for (let i = 29; i < 110; i++) {
        const major = i === 50 || i === 109;
        t += `<path d="M${barX(i) + 0.5} 1812V${major ? 1827 : 1821}" stroke="#888" stroke-width="${major ? 3 : 2}" opacity="${Math.min(1, (i - 28) / 10)}"/>`;
    }
    document.getElementById('ticks').innerHTML = t;
}

function drawCost() {
    let s = '<rect x="695.5" y="805.5" width="354" height="690" fill="none" stroke="#c8c8c8" stroke-width="1.500"/>';
    cost.forEach((w, i) => {
        s += `<rect x="696" y="${806.3 + i * 4.622}" width="${w / 3}" height="3" fill="${i < PROFIT_ROW ? '#68b455' : '#ca5554'}"/>`;
    });
    s += roundButton(817, 'M-7 -16L9 0L-7 16', '#f2f2f2', '#666');
    s += roundButton(1001, 'M-16 -3V-16H-2M-15 -16L-3 -5M16 3V16H2M15 16L3 5', 'rgb(254, 240, 232)', '#dc5a10');
    document.getElementById('chips').innerHTML = s;
}

drawKline();
drawVolume();
drawCost();
```
